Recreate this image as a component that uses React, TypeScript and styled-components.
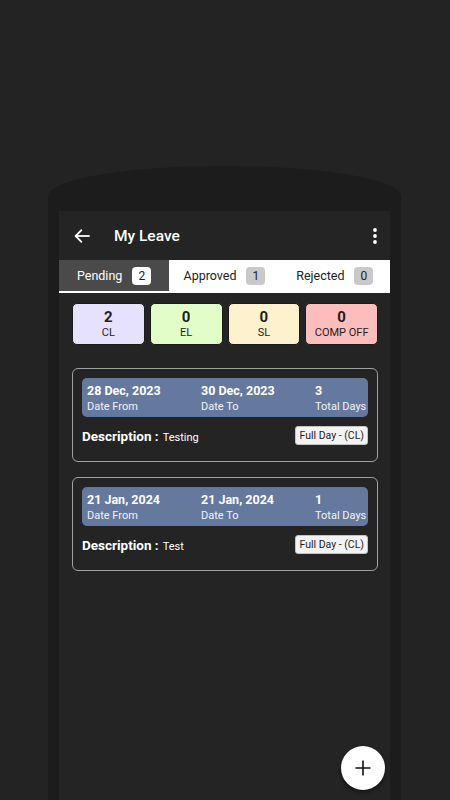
import React from 'react';
import styled, { createGlobalStyle } from 'styled-components';

const GlobalStyle = createGlobalStyle`
  html, body {
    margin: 0;
    padding: 0;
    background: #232323;
    font-family: Roboto, 'Liberation Sans', Arial, sans-serif;
  }
  * {
    box-sizing: border-box;
  }
`;

interface LeaveItem {
  id: number;
  from: string;
  to: string;
  days: number;
  description: string;
  type: string;
}

interface TabItem {
  label: string;
  count: number;
}

interface StatItem {
  value: number;
  label: string;
  color: string;
}

const tabs: TabItem[] = [
  { label: 'Pending', count: 2 },
  { label: 'Approved', count: 1 },
  { label: 'Rejected', count: 0 },
];

const stats: StatItem[] = [
  { value: 2, label: 'CL', color: '#e6e1fd' },
  { value: 0, label: 'EL', color: '#e3fdc9' },
  { value: 0, label: 'SL', color: '#fdf2cd' },
  { value: 0, label: 'COMP OFF', color: '#fdbdbd' },
];

const leaves: LeaveItem[] = [
  { id: 1, from: '28 Dec, 2023', to: '30 Dec, 2023', days: 3, description: 'Testing', type: 'Full Day - (CL)' },
  { id: 2, from: '21 Jan, 2024', to: '21 Jan, 2024', days: 1, description: 'Test', type: 'Full Day - (CL)' },
];

const Page = styled.div`
  height: 800px;
  overflow: hidden;
  padding: 166px 0 0 48px;
`;

const Frame = styled.div`
  width: 353px;
  height: 634px;
  background: #1c1c1c;
  border-radius: 50% 50% 0 0 / 30px 30px 0 0;
  padding: 45px 11px 0;
  display: flex;
  flex-direction: column;
`;

const Screen = styled.div`
  flex: 1;
  position: relative;
  background: #242424;
  overflow: hidden;
`;

const AppBar = styled.div`
  height: 49px;
  display: flex;
  align-items: center;
  padding: 0 12px 0 14px;
  color: #fff;
`;

const Title = styled.div`
  margin-left: 23px;
  font-size: 15.5px;
  font-weight: 500;
`;

const IconButton = styled.div<{ $push?: boolean }>`
  display: flex;
  align-items: center;
  justify-content: center;
  margin-left: ${(p) => (p.$push ? 'auto' : '0')};
`;

const TabBar = styled.div`
  display: flex;
  height: 33px;
  background: #fff;
`;

const Tab = styled.div<{ $active: boolean }>`
  flex: 1;
  display: flex;
  align-items: center;
  justify-content: center;
  gap: 10px;
  font-size: 12.5px;
  background: ${(p) => (p.$active ? '#4a4a4a' : '#fff')};
  color: ${(p) => (p.$active ? '#fff' : '#222')};
  border-bottom: 2px solid ${(p) => (p.$active ? '#fff' : 'transparent')};
`;

const Badge = styled.span<{ $active: boolean }>`
  min-width: 19px;
  height: 18px;
  border-radius: 4px;
  display: flex;
  align-items: center;
  justify-content: center;
  font-size: 12px;
  background: ${(p) => (p.$active ? '#fff' : '#c9c9c9')};
  color: #222;
`;

const StatGrid = styled.div`
  display: grid;
  grid-template-columns: repeat(4, 1fr);
  gap: 5px;
  margin: 10px 12px 0 13px;
`;

const StatCard = styled.div<{ $bg: string }>`
  height: 42px;
  border-radius: 5px;
  background: ${(p) => p.$bg};
  border: 1px solid #1a1a1a;
  display: flex;
  flex-direction: column;
  align-items: center;
  justify-content: center;
  color: #1e1e1e;
`;

const StatValue = styled.div`
  font-size: 15px;
  font-weight: 700;
  line-height: 18px;
`;

const StatLabel = styled.div`
  font-size: 11px;
  line-height: 14px;
`;

const LeaveList = styled.div`
  display: flex;
  flex-direction: column;
  gap: 15px;
  margin: 23px 12px 0 13px;
`;

const LeaveCard = styled.div`
  border: 1px solid #a0a0a0;
  border-radius: 6px;
  padding: 9px 9px 16px;
`;

const DateBox = styled.div`
  display: grid;
  grid-template-columns: 114px 114px 1fr;
  background: #65799f;
  border-radius: 5px;
  padding: 4px 5px 3px;
  color: #fff;
  white-space: nowrap;
`;

const DateValue = styled.div`
  font-size: 12.5px;
  font-weight: 700;
  line-height: 17px;
`;

const DateLabel = styled.div`
  font-size: 11px;
  line-height: 15px;
  color: #f1f3f8;
`;

const DescRow = styled.div`
  display: flex;
  align-items: center;
  justify-content: space-between;
  margin-top: 9px;
  color: #fff;
`;

const DescLabel = styled.span`
  font-size: 13.5px;
  font-weight: 700;
`;

const DescText = styled.span`
  font-size: 11px;
  margin-left: 4px;
`;

const Chip = styled.div`
  background: #f3f3f3;
  color: #1e1e1e;
  font-size: 10.5px;
  line-height: 15px;
  padding: 1px 3px;
  border-radius: 3px;
  border: 1px solid #c4c4c4;
`;

const Fab = styled.div`
  position: absolute;
  right: 5px;
  bottom: 10px;
  width: 44px;
  height: 44px;
  border-radius: 50%;
  background: #fff;
  display: flex;
  align-items: center;
  justify-content: center;
  box-shadow: 0 2px 4px rgba(0, 0, 0, 0.5);
`;

const BackArrow = () => (
  <svg width="18" height="18" viewBox="0 0 24 24" fill="none" stroke="#fff" strokeWidth="2.4" strokeLinecap="square">
    <path d="M21 12H4" />
    <path d="M11 4.5L3.5 12l7.5 7.5" />
  </svg>
);

const Kebab = () => (
  <svg width="6" height="18" viewBox="0 0 6 18" fill="#fff">
    <circle cx="3" cy="3" r="1.9" />
    <circle cx="3" cy="9" r="1.9" />
    <circle cx="3" cy="15" r="1.9" />
  </svg>
);

const Plus = () => (
  <svg width="18" height="18" viewBox="0 0 18 18" stroke="#111" strokeWidth="1.6">
    <path d="M9 1.5v15M1.5 9h15" />
  </svg>
);

const App: React.FC = () => {
  const activeTab = 0;

  return (
    <>
      <GlobalStyle />
      <Page>
        <Frame>
          <Screen>
            <AppBar>
              <IconButton>
                <BackArrow />
              </IconButton>
              <Title>My Leave</Title>
              <IconButton $push>
                <Kebab />
              </IconButton>
            </AppBar>

            <TabBar>
              {tabs.map((tab, i) => (
                <Tab key={tab.label} $active={i === activeTab}>
                  {tab.label}
                  <Badge $active={i === activeTab}>{tab.count}</Badge>
                </Tab>
              ))}
            </TabBar>

            <StatGrid>
              {stats.map((s) => (
                <StatCard key={s.label} $bg={s.color}>
                  <StatValue>{s.value}</StatValue>
                  <StatLabel>{s.label}</StatLabel>
                </StatCard>
              ))}
            </StatGrid>

            <LeaveList>
              {leaves.map((item) => (
                <LeaveCard key={item.id}>
                  <DateBox>
                    <div>
                      <DateValue>{item.from}</DateValue>
                      <DateLabel>Date From</DateLabel>
                    </div>
                    <div>
                      <DateValue>{item.to}</DateValue>
                      <DateLabel>Date To</DateLabel>
                    </div>
                    <div>
                      <DateValue>{item.days}</DateValue>
                      <DateLabel>Total Days</DateLabel>
                    </div>
                  </DateBox>
                  <DescRow>
                    <div>
                      <DescLabel>Description :</DescLabel>
                      <DescText>{item.description}</DescText>
                    </div>
                    <Chip>{item.type}</Chip>
                  </DescRow>
                </LeaveCard>
              ))}
            </LeaveList>

            <Fab>
              <Plus />
            </Fab>
          </Screen>
        </Frame>
      </Page>
    </>
  );
};

export default App;
